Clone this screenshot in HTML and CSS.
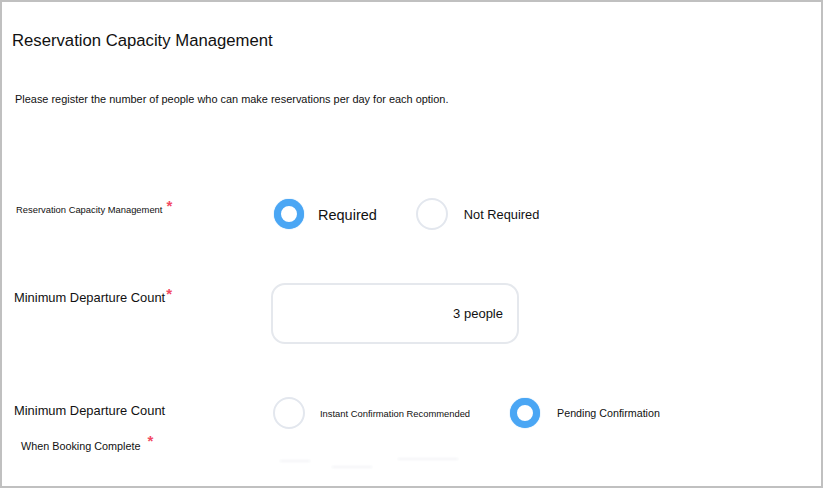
FILE: index.html
```html
<!DOCTYPE html>
<html>
  <head>
    <meta charset="utf-8">
    <link rel="stylesheet" href="styles.css">
  </head>
  <body>
    <div class="panel">
      <h1 class="title">Reservation Capacity Management</h1>
      <p class="desc">Please register the number of people who can make reservations per day for each option.</p>

      <div class="row row-capacity">
        <div class="label label-small">Reservation Capacity Management<span class="req">*</span></div>
        <div class="options">
          <label class="opt opt-required"><span class="radio on"></span><span class="opt-text">Required</span></label>
          <label class="opt opt-none"><span class="radio"></span><span class="opt-text">Not Required</span></label>
        </div>
      </div>

      <div class="row row-count">
        <div class="label">Minimum Departure Count<span class="req">*</span></div>
        <div class="field">
          <div class="input">3 people</div>
        </div>
      </div>

      <div class="row row-confirm">
        <div class="label">
          <div>Minimum Departure Count</div>
          <div class="label-sub">When Booking Complete<span class="req">*</span></div>
        </div>
        <div class="options">
          <label class="opt opt-instant"><span class="radio"></span><span class="opt-text">Instant Confirmation Recommended</span></label>
          <label class="opt opt-pending"><span class="radio on"></span><span class="opt-text">Pending Confirmation</span></label>
        </div>
      </div>

      <div class="fade">
        <span></span><span></span><span></span>
      </div>
    </div>
  </body>
</html>
```

FILE: styles.css
```css
html, body {
  margin: 0;
  height: 100%;
  background: #fff;
}

body {
  font-family: "Liberation Sans", Arial, sans-serif;
  color: #111;
}

.panel {
  box-sizing: border-box;
  width: 823px;
  height: 488px;
  border: 2px solid #c0c0c0;
  padding: 0 12px;
  overflow: hidden;
}

.title {
  margin: 29px 0 0 -2px;
  font-size: 16.7px;
  line-height: 20px;
  font-weight: normal;
}

.desc {
  margin: 42px 0 0 1px;
  font-size: 10.95px;
  line-height: 13px;
}

.row {
  display: flex;
}

.label {
  width: 260px;
  flex: none;
  font-size: 12.9px;
  line-height: 15px;
}

.req {
  color: #f24a63;
  font-size: 15px;
  font-weight: bold;
  line-height: 10px;
  position: relative;
  top: -3px;
  margin-left: 2px;
}

/* radio group rows */

.row-capacity {
  margin-top: 85px;
  height: 46px;
  align-items: center;
}

.label-small {
  font-size: 9.4px;
  padding-left: 2px;
  width: 258px;
  margin-top: -9px;
}

.label-small .req {
  margin-left: 4px;
  top: -2px;
}

.options {
  display: flex;
  align-items: center;
}

.opt {
  display: flex;
  align-items: center;
}

.radio {
  box-sizing: border-box;
  width: 32px;
  height: 32px;
  border-radius: 50%;
  border: 2px solid #e3e7ee;
  background: #fff;
  flex: none;
}

.radio.on {
  width: 30px;
  height: 30px;
  border: 7px solid #4aa6f4;
  box-shadow: 0 0 1px #4aa6f4;
}

.opt-required .opt-text {
  font-size: 14.5px;
  margin-left: 14px;
  padding-top: 2px;
}

.opt-none {
  margin-left: 39px;
}

.opt-none .opt-text {
  font-size: 12.8px;
  margin-left: 16px;
  padding-top: 1px;
}

/* input row */

.row-count {
  margin-top: 46px;
}

.row-count .label {
  padding-top: 7px;
}

.row-count .req {
  margin-left: 1px;
}

.input {
  box-sizing: border-box;
  margin-left: -3px;
  width: 248px;
  height: 61px;
  border: 2px solid #e5e8ed;
  border-radius: 14px;
  padding-right: 14px;
  display: flex;
  align-items: center;
  justify-content: flex-end;
  font-size: 13px;
}

/* confirmation row */

.row-confirm {
  margin-top: 53px;
  align-items: flex-start;
}

.row-confirm .label {
  padding-top: 6px;
}

.label-sub {
  font-size: 10.8px;
  line-height: 13px;
  margin: 22px 0 0 7px;
}

.label-sub .req {
  margin-left: 7px;
  top: -4px;
}

.opt-instant {
  margin-left: -1px;
}

.opt-instant .opt-text {
  font-size: 9.4px;
  margin-left: 15px;
}

.opt-pending {
  margin-left: 40px;
}

.opt-pending .opt-text {
  font-size: 10.7px;
  margin-left: 17px;
}

/* faded content under the fold */

.fade {
  position: relative;
  height: 20px;
  margin-top: 5px;
}

.fade span {
  position: absolute;
  height: 2px;
  background: #f3f4f7;
  filter: blur(1px);
}

.fade span:nth-child(1) { left: 266px; top: 2px; width: 30px; }
.fade span:nth-child(2) { left: 384px; top: 0; width: 60px; }
.fade span:nth-child(3) { left: 318px; top: 8px; width: 40px; }
```
